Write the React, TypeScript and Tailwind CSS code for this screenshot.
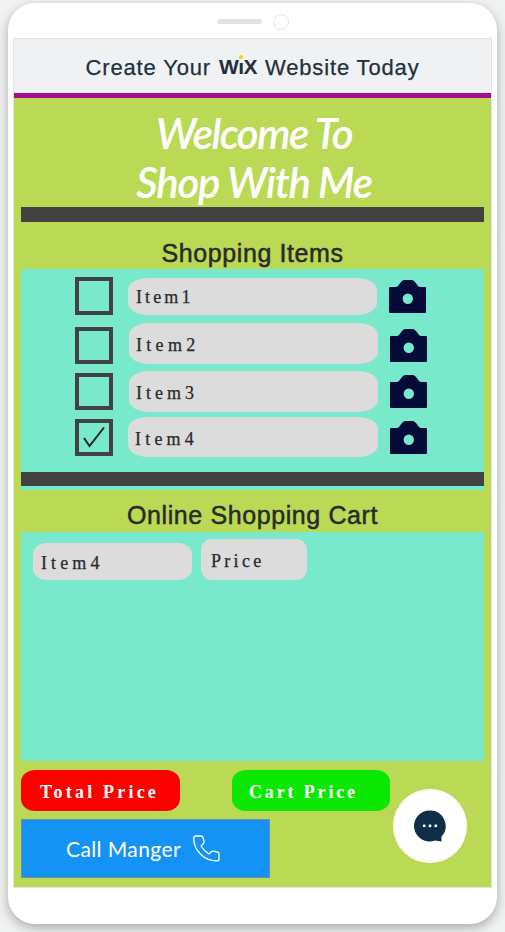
const sans = "font-['Liberation_Sans',Arial,sans-serif]";
const round = "font-['Lato',sans-serif]";
const slab = "font-['Liberation_Serif',serif]";

const rows = [
  { name: "Item1", checked: false, track: "tracking-[3.100px]", row: "h-[45px]", box: "h-[38px]", pill: "mt-px ml-[15px] h-[37px] w-[249px] pt-[2px]", cam: "mt-[3px] ml-3" },
  { name: "Item2", checked: false, track: "tracking-[4.300px]", row: "h-[49px]", box: "mt-[5px] h-[37px]", pill: "mt-px ml-4 h-[41px] w-[249px] pt-[3px] -indent-px", cam: "mt-[7px] ml-3" },
  { name: "Item3", checked: false, track: "tracking-[4px]", row: "h-[46px]", box: "mt-[2px] h-[37px]", pill: "ml-4 h-[41px] w-[249px] pt-[4px] -indent-px", cam: "mt-1 ml-3" },
  { name: "Item4", checked: true, track: "tracking-[4.200px]", row: "h-[55px]", box: "mt-[2px] h-[37px]", pill: "ml-[15px] h-[40px] w-[250px] pt-[4px] -indent-px", cam: "mt-1 ml-3" },
];

function Camera({ className }: { className: string }) {
  return (
    <svg viewBox="0 0 37 33" className={`h-[33px] w-[37px] shrink-0 ${className}`}>
      <path fill="#050b38" fillRule="evenodd" d="M1 7h6q1 0 2-1l3-4q1.500-2 3.500-2h7q2 0 3.500 2l3 4q1 1 2 1h5q1 0 1 1v24q0 1-1 1H1q-1 0-1-1V8q0-1 1-1ZM18.800 13.500a5.200 5.200 0 1 0 0 10.400a5.200 5.200 0 0 0 0-10.400Z" />
    </svg>
  );
}

export default function App() {
  return (
    <div className="h-[932px] w-[505px] overflow-hidden bg-[#f1f3f3] pt-[3px] pl-2">
      <div className="h-[921px] w-[489px] rounded-[27px] bg-white px-[5px] shadow-[0_4px_12px_rgba(0,0,0,0.3)]">
        <div className="flex h-[35px] items-center justify-center gap-[11px] pt-[2px]">
          <div className="h-[5px] w-[45px] rounded-full bg-[#e2e1e7]" />
          <div className="size-[16px] rounded-full border-[1.500px] border-[#e2e2e5]" />
        </div>
        <div className="h-[850px] w-[479px] border border-[#e2e4e8] bg-[#bad955]">
          <header className={`flex h-[54px] items-center justify-center bg-[#eff1f3] pt-[2px] text-[22px] text-[#20303c] ${sans}`}>
            <span className="tracking-[0.850px] whitespace-pre [-webkit-text-stroke:0.250px_#20303c]">Create Your </span>
            <span className="relative inline-flex w-[40px] justify-center text-[21px] font-bold tracking-[-0.500px]">
              W<span>ı</span>X
              <i className="absolute top-[4px] left-[21px] size-[4px] rounded-full bg-[#fbca16]" />
            </span>
            <span className="tracking-[0.850px] whitespace-pre [-webkit-text-stroke:0.250px_#20303c]"> Website Today</span>
          </header>
          <div className="h-[5px] bg-[#a10f8e]" />
          <main className="px-[7px]">
            <h1 className={`flex h-[109px] flex-col items-center pt-[11px] pl-[3px] text-[42px] leading-[49px] font-semibold tracking-[-1.500px] whitespace-nowrap text-white italic ${round}`}>
              <span>Welcome To</span>
              <span className="tracking-[-1.300px]">Shop With Me</span>
            </h1>
            <div className="h-[15px] bg-[#424242]" />
            <h2 className={`flex h-[47px] items-center justify-center pt-[17px] text-[25px] tracking-[0.600px] text-[#2a2b28] [-webkit-text-stroke:0.500px_#2a2b28] ${sans}`}>Shopping Items</h2>
            <section className="h-[221px] bg-[#78e9cb] pt-2">
              {rows.map((r) => (
                <div key={r.name} className={`flex items-start pl-[54px] ${r.row}`}>
                  <div className={`w-[38px] shrink-0 border-4 border-[#424242] ${r.box}`}>
                    {r.checked && (
                      <svg viewBox="0 0 30 29" className="h-[29px] w-[30px]">
                        <path d="M5 15l5.500 8L25 4.500" fill="none" stroke="#202523" strokeWidth="2" />
                      </svg>
                    )}
                  </div>
                  <div className={`flex shrink-0 items-center rounded-[20px/12px] bg-[#dcdcdc] pl-2 text-[18px] text-[#292929] [-webkit-text-stroke:0.250px_#292929] ${slab} ${r.track} ${r.pill}`}>{r.name}</div>
                  <Camera className={r.cam} />
                </div>
              ))}
              <div className="h-[14px] bg-[#424242]" />
            </section>
            <h2 className={`flex h-[42px] items-center justify-center pt-[10px] text-[25px] tracking-[0.600px] text-[#2a2b28] [-webkit-text-stroke:0.500px_#2a2b28] ${sans}`}>Online Shopping Cart</h2>
            <section className={`flex h-[229px] items-start gap-[9px] bg-[#78e9cb] pt-[7px] pl-3 text-[18px] text-[#292929] [-webkit-text-stroke:0.250px_#292929] ${slab}`}>
              <div className="mt-1 flex h-[37px] w-[159px] items-center rounded-[14px/11px] bg-[#dcdcdc] pt-1 pl-2 tracking-[4.100px]">Item4</div>
              <div className="flex h-[41px] w-[106px] items-center rounded-[11px] bg-[#dcdcdc] pt-1 pl-[10px] tracking-[3.300px]">Price</div>
            </section>
            <div className="relative pt-[9px]">
              <div className={`flex gap-[52px] text-[18px] font-bold text-white ${slab}`}>
                <button className="flex h-[41px] w-[159px] items-center rounded-[14px/12px] bg-[#ff0000] pt-[3px] pl-[19px] tracking-[3.200px] whitespace-nowrap">Total Price</button>
                <button className="flex h-[41px] w-[158px] items-center rounded-[14px/12px] bg-[#0ae803] pt-[3px] pl-[17px] tracking-[2.850px] whitespace-nowrap">Cart Price</button>
              </div>
              <button className={`mt-2 flex h-[59px] w-[249px] items-center border border-[#6c8fa2] bg-[#1593f4] pl-[44px] text-[21px] text-white ${round}`}>
                <span className="w-[127px] text-left tracking-[0.400px] whitespace-nowrap">Call Manger</span>
                <svg viewBox="0 0 27 27" className="h-[27px] w-[27px]" fill="none" stroke="white" strokeWidth="1.300">
                  <path d="M3 1h5q1.500 0 2 1.500l1 4q.3 1.300-.8 2.300L8 11q3 5 8 8l2-2q1-1.200 2.600-.8l4.100 1q1.300.4 1.300 1.700v5q0 2-2 2C11.500 26.400.7 15.500.7 3Q.9 1 3 1Z" />
                </svg>
              </button>
              <button className="absolute top-[28px] left-[372px] flex size-[74px] items-center justify-center rounded-full bg-white">
                <svg viewBox="0 0 32 32" className="size-[32px]">
                  <path fill="#0f2e49" d="M16 .5A15.500 15.500 0 0 1 27.500 26.500V31.500L21 30.500A15.500 15.500 0 1 1 16 .5Z" />
                  <g fill="white"><circle cx="10.200" cy="15.700" r="1.500" /><circle cx="16" cy="15.700" r="1.500" /><circle cx="21.800" cy="15.700" r="1.500" /></g>
                </svg>
              </button>
            </div>
          </main>
        </div>
      </div>
    </div>
  );
}
